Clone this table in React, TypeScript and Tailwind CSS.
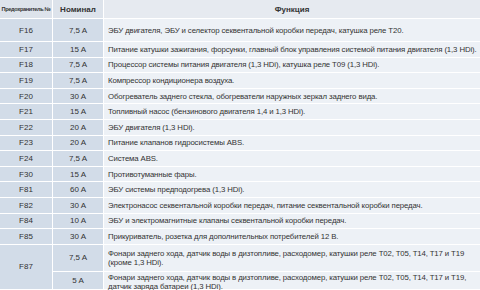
import React from 'react'

type Fuse = {
  id: string
  amp: string
  text: string
}

const fuses: Fuse[] = [
  { id: 'F17', amp: '15 A', text: 'Питание катушки зажигания, форсунки, главный блок управления системой питания двигателя (1,3 HDi).' },
  { id: 'F18', amp: '7,5 A', text: 'Процессор системы питания двигателя (1,3 HDi), катушка реле T09 (1,3 HDi).' },
  { id: 'F19', amp: '7,5 A', text: 'Компрессор кондиционера воздуха.' },
  { id: 'F20', amp: '30 A', text: 'Обогреватель заднего стекла, обогреватели наружных зеркал заднего вида.' },
  { id: 'F21', amp: '15 A', text: 'Топливный насос (бензинового двигателя 1,4 и 1,3 HDi).' },
  { id: 'F22', amp: '20 A', text: 'ЭБУ двигателя (1,3 HDi).' },
  { id: 'F23', amp: '20 A', text: 'Питание клапанов гидросистемы ABS.' },
  { id: 'F24', amp: '7,5 A', text: 'Система ABS.' },
  { id: 'F30', amp: '15 A', text: 'Противотуманные фары.' },
  { id: 'F81', amp: '60 A', text: 'ЭБУ системы предподогрева (1,3 HDi).' },
  { id: 'F82', amp: '30 A', text: 'Электронасос секвентальной коробки передач, питание секвентальной коробки передач.' },
  { id: 'F84', amp: '10 A', text: 'ЭБУ и электромагнитные клапаны секвентальной коробки передач.' },
  { id: 'F85', amp: '30 A', text: 'Прикуриватель, розетка для дополнительных потребителей 12 В.' },
]

const keyCell = 'flex items-center justify-center bg-[#d2dce8]'
const textCell = 'flex items-center bg-[#edf1f6] pl-[4px] pr-[2px] text-[7.8px] tracking-[-0.12px]'

export default function App() {
  return (
    <div
      className="h-[290px] w-[480px] overflow-hidden bg-white text-[8px] leading-[9px] text-[#333]"
      style={{ fontFamily: '"Liberation Sans", Arial, sans-serif' }}
    >
      <div className="grid grid-cols-[52px_50px_1fr] grid-rows-[18px_22px_repeat(13,14.6px)_26px_17px] gap-px bg-white">
        {/* шапка */}
        <div className="flex items-center justify-center bg-[#dde3eb] text-[5.6px] font-bold tracking-[-0.35px] whitespace-nowrap">
          Предохранитель №
        </div>
        <div className="flex items-center justify-center bg-[#dde3eb] font-bold">Номинал</div>
        <div className="flex items-center justify-center bg-[#e6eaf0] font-bold">Функция</div>

        <div className={keyCell}>F16</div>
        <div className={keyCell}>7,5 A</div>
        <div className={textCell}>ЭБУ двигателя, ЭБУ и селектор секвентальной коробки передач, катушка реле T20.</div>

        {fuses.map((f) => (
          <React.Fragment key={f.id}>
            <div className={keyCell}>{f.id}</div>
            <div className={keyCell}>{f.amp}</div>
            <div className={textCell}>{f.text}</div>
          </React.Fragment>
        ))}

        <div className={`${keyCell} row-span-2`}>F87</div>
        <div className={keyCell}>7,5 A</div>
        <div className={textCell}>
          Фонари заднего хода, датчик воды в дизтопливе, расходомер, катушки реле T02, T05, T14, T17 и T19 (кроме 1,3 HDi).
        </div>
        <div className={keyCell}>5 A</div>
        <div className={`${textCell} items-start pt-[1px]`}>
          Фонари заднего хода, датчик воды в дизтопливе, расходомер, катушки реле T02, T05, T14, T17 и T19, датчик заряда батареи (1,3 HDi).
        </div>
      </div>
    </div>
  )
}
